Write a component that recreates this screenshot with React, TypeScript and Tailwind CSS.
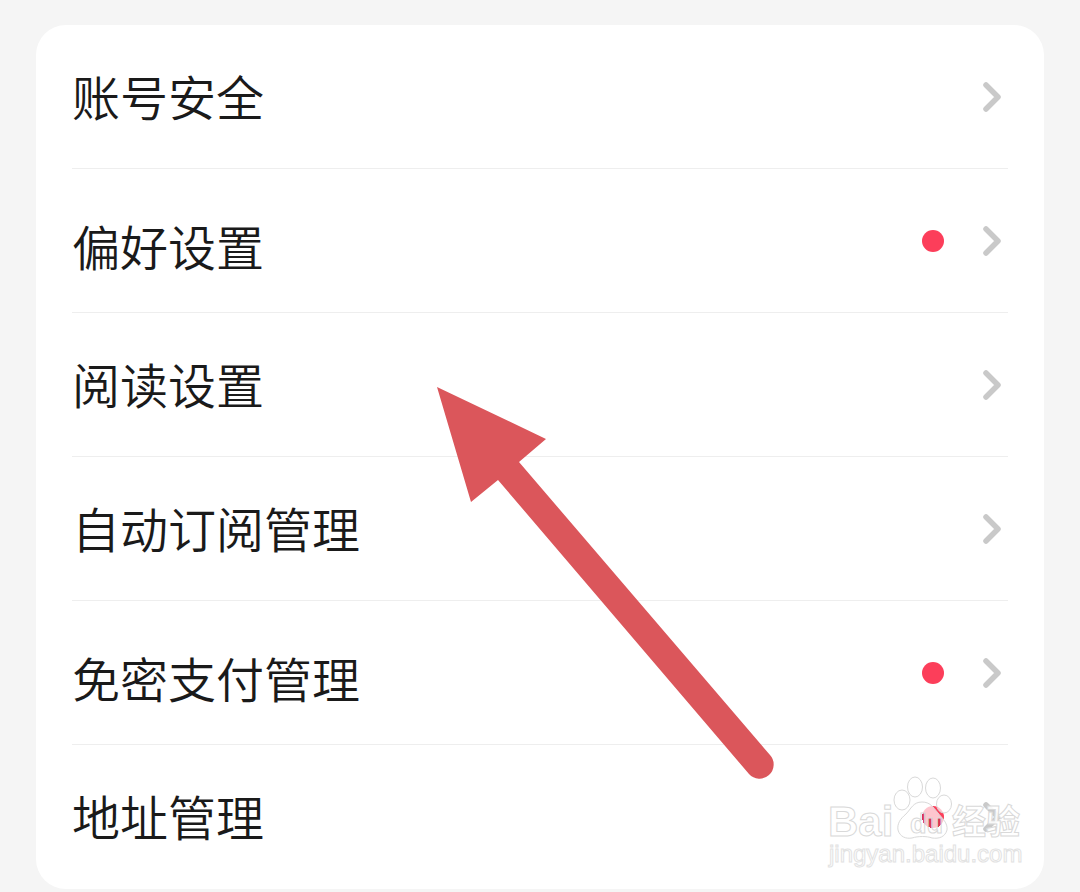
import React from "react"

interface SettingItem {
    name: string;
    dot?: boolean;
    low?: boolean;
}

const Settings: SettingItem[] = [
    { name: '账号安全' },
    { name: '偏好设置', dot: true, low: true },
    { name: '阅读设置' },
    { name: '自动订阅管理' },
    { name: '免密支付管理', dot: true, low: true },
    { name: '地址管理', dot: true },
];

function Chevron() {
    return (
        <svg width="24" height="32" viewBox="0 0 24 32" fill="none" aria-hidden="true">
            <path d="M6 4L18 16L6 28" stroke="#c9c9c9" strokeWidth="5.5" strokeLinecap="round" strokeLinejoin="round" />
        </svg>
    )
}

function SettingRow({ item }: { item: SettingItem }) {
    return (
        <li className="border-b border-[#eeeeee] last:border-transparent">
            <button type="button" className="flex h-[143px] w-full items-center pr-1 text-left">
                <span className={`flex-1 text-[48px] leading-[72px] ${item.low ? 'pt-2' : 'pb-1'}`}>{item.name}</span>
                {item.dot && <span className="mr-9 size-[22px] rounded-full bg-[#fc3e5a]" />}
                <Chevron />
            </button>
        </li>
    )
}

// red pointer lying over the list
function Arrow() {
    return (
        <svg className="pointer-events-none absolute left-[437px] top-[387px]" width="340" height="394" viewBox="0 0 340 394" aria-hidden="true">
            <path d="M0 0L109 52L82 75L333 368A14 14 0 0 1 312 387L61 93L34 115Z" fill="#db565b" />
        </svg>
    )
}

function Watermark() {
    return (
        <svg
            className="pointer-events-none absolute left-[820px] top-[770px] font-['Liberation_Sans','Noto_Sans_CJK_SC',sans-serif]"
            width="210"
            height="104"
            viewBox="0 0 210 104"
            fill="#ffffff"
            stroke="#d9d9d9"
        >
            {/* letters turn red where they cross the dot */}
            <radialGradient id="letters" gradientUnits="userSpaceOnUse" cx="113" cy="47" r="11">
                <stop offset="1" stopColor="#dc3352" />
                <stop offset="1" stopColor="#ffffff" />
            </radialGradient>
            <text x="8" y="66" fontSize="42" fontWeight="700">Bai</text>
            <g fillOpacity="0.7">
                <ellipse cx="82" cy="30" rx="8" ry="10" />
                <ellipse cx="95" cy="17" rx="7.5" ry="10" />
                <ellipse cx="113" cy="18" rx="7.5" ry="10" />
                <ellipse cx="124" cy="34" rx="7.5" ry="9" />
                <path d="M102 32C93 32 91 39 86 44C80 49 77 54 78 60C80 67 86 69 92 68C98 66 107 66 112 68C119 69 125 67 127 60C128 53 122 48 118 43C113 37 110 32 102 32Z" />
            </g>
            <text x="90" y="63" fontSize="27" fontWeight="700" fill="url(#letters)">du</text>
            <text x="132" y="64" fontSize="34" fontWeight="700" fillOpacity="0.9">经验</text>
            <text x="9" y="92" fontSize="24" fontWeight="400" stroke="#e2e2e2">jingyan.baidu.com</text>
        </svg>
    )
}

export default function App() {
    return (
        <div className="relative bg-[#f5f5f5] pb-1 pt-[25px] font-['Noto_Sans_CJK_SC',sans-serif] font-[350] text-[#1a1a1a]">
            <ul className="mx-9 rounded-[30px] bg-white px-9">
                {Settings.map((item) => (
                    <SettingRow key={item.name} item={item} />
                ))}
            </ul>
            <Arrow />
            <Watermark />
        </div>
    )
}
